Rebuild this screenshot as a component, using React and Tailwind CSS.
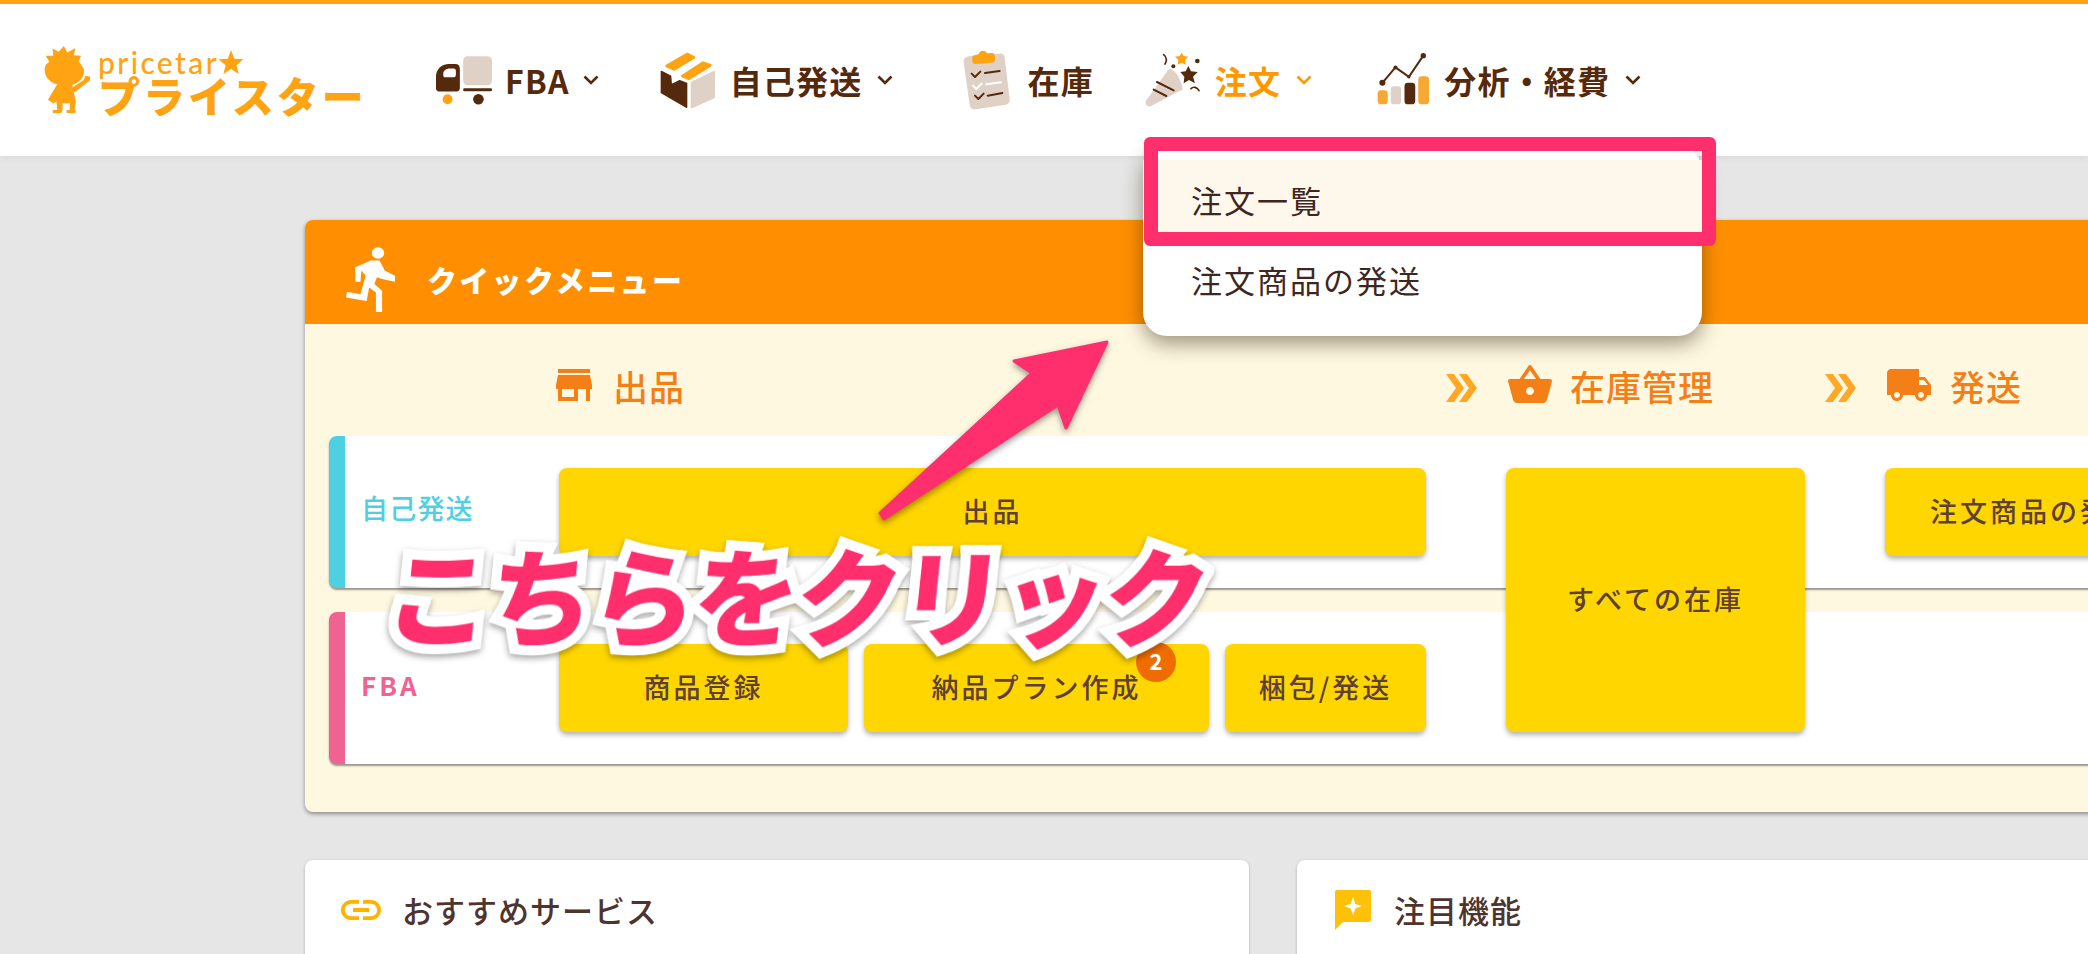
import React from "react";

const Chevron = ({ color = "#55290b" }) => (
  <svg width="16" height="10" viewBox="0 0 16 10" className="shrink-0">
    <path d="M1.5 1.5 L8 8 L14.5 1.5" fill="none" stroke={color} strokeWidth="2.6" />
  </svg>
);

const Mascot = () => (
  <svg width="48" height="70" viewBox="40 30 145 210" className="shrink-0">
    <g fill="#ffa313">
      <path d="M45 62 L68 62 L66 40 L84 50 L100 32 L110 52 L135 38 L130 60 L152 62 L145 78 L160 100 C166 130 140 152 105 152 C70 152 42 135 42 105 C42 92 48 86 56 80 Z" />
      <path d="M80 148 L125 148 L136 200 L132 228 L118 228 L118 205 L96 205 L96 228 L80 228 L78 200 L68 205 L52 195 Z" />
      <path d="M122 160 L160 135 L165 122 L180 125 L178 137 L132 172 Z" />
      <rect x="66" y="226" width="28" height="9" rx="4" />
      <rect x="108" y="226" width="28" height="9" rx="4" />
    </g>
  </svg>
);

const Logo = () => (
  <div className="flex w-[326px] items-center shrink-0">
    <Mascot />
    <div className="ml-[6px] pb-[4px] flex flex-col">
      <div className="mt-[5px] flex items-center h-[30px] text-[#ffa313] text-[30px] leading-none font-medium font-['Lato',sans-serif] tracking-[2.4px]">
        pricetar
        <svg width="26" height="26" viewBox="0 0 24 24" className="-ml-[1px]">
          <path fill="#ffa313" d="M12 1 L15 9 L23.500 9.500 L17 15 L19 23 L12 18.500 L5 23 L7 15 L0.500 9.500 L9 9 Z" />
        </svg>
      </div>
      <div className="h-[36px] text-[#ffa313] text-[42px] leading-[36px] font-black whitespace-nowrap tracking-[3px]">プライスター</div>
    </div>
  </div>
);

const IconTruckCart = () => (
  <svg width="58" height="50" viewBox="30 45 175 150" className="shrink-0">
    <rect x="115" y="48" width="87" height="88" rx="14" fill="#e0d1c7" />
    <rect x="115" y="145" width="87" height="9" rx="4" fill="#55290b" />
    <path fill="#55290b" fillRule="evenodd" d="M33 110 C33 88 50 72 72 72 L92 72 C100 72 105 78 105 86 L105 145 C105 151 100 155 95 155 L42 155 C37 155 33 151 33 146 Z M55 100 C55 92 64 85 75 85 L86 85 C91 85 93 88 93 92 L93 104 C93 109 90 112 85 112 L60 112 C57 112 55 109 55 105 Z" />
    <circle cx="68" cy="178" r="15" fill="#ffa313" />
    <circle cx="161" cy="178" r="16" fill="#55290b" />
  </svg>
);

const IconBox = () => (
  <svg width="56" height="58" viewBox="713 33 168 174" className="shrink-0">
    <path fill="#ffa313" stroke="#ffa313" strokeWidth="8" strokeLinejoin="round" d="M733 78 L795 42 L815 52 L755 88 Z" />
    <path fill="#ffa313" stroke="#ffa313" strokeWidth="8" strokeLinejoin="round" d="M780 108 L842 68 L864 76 L800 116 Z" />
    <path fill="#e0d1c7" stroke="#e0d1c7" strokeWidth="6" strokeLinejoin="round" d="M808 128 L875 96 L875 172 L808 202 Z" />
    <path fill="#55290b" stroke="#55290b" strokeWidth="4" strokeLinejoin="round" d="M717 94 L745 108 L747 134 L760 128 L772 122 L793 130 L793 202 L717 158 Z" />
  </svg>
);

const IconClipboard = () => (
  <svg width="47" height="60" viewBox="40 33 141 180" className="shrink-0">
    <path fill="#e0d1c7" d="M58 52 L150 44 C160 43 164 48 165 56 L180 180 C181 190 176 196 168 197 L78 211 C68 212 62 208 60 198 L42 70 C41 60 48 54 58 52 Z" />
    <path fill="#ffa313" d="M68 58 C66 52 72 48 78 48 L87 46 C88 36 105 30 112 43 L127 42 C134 42 136 48 136 54 L136 62 C136 68 132 70 126 71 L76 75 C70 75 68 70 68 65 Z" />
    <g fill="none" strokeWidth="6" strokeLinecap="round" strokeLinejoin="round">
      <path stroke="#55290b" d="M66 104 L76 114 L92 98" />
      <path stroke="#55290b" d="M106 102 L150 96" />
      <path stroke="#fff" d="M70 140 L80 150 L96 134" />
      <path stroke="#fff" d="M110 136 L154 130" />
      <path stroke="#55290b" d="M76 170 L86 180 L102 164" />
      <path stroke="#55290b" d="M114 170 L158 162" />
    </g>
  </svg>
);

const IconParty = () => (
  <svg width="55" height="55" viewBox="586 40 165 165" className="shrink-0">
    <path fill="#e0d1c7" stroke="#e0d1c7" strokeWidth="8" strokeLinejoin="round" d="M660 94 C680 100 690 130 695 150 L604 198 C596 202 590 196 593 188 Z" />
    <path stroke="#55290b" strokeWidth="6" strokeLinecap="round" d="M622 130 L672 155 M612 153 L650 172" fill="none" />
    <path fill="#55290b" d="M716 82 L724 98 L744 100 L730 114 L736 134 L718 124 L702 134 L704 114 L692 100 L708 98 Z" />
    <path fill="#ffa313" d="M696 42 L702 52 L716 54 L706 64 L708 78 L696 72 L684 78 L686 64 L676 54 L690 52 Z" />
    <circle cx="671" cy="83" r="6" fill="#55290b" />
    <circle cx="743" cy="67" r="7" fill="#55290b" />
    <path fill="none" stroke="#55290b" strokeWidth="5" strokeLinecap="round" d="M642 48 C652 56 652 68 646 76 M724 150 C732 142 742 146 748 156" />
  </svg>
);

const IconChart = () => (
  <svg width="53" height="53" viewBox="17 29 158 158" className="shrink-0">
    <rect x="19" y="140" width="30" height="42" rx="10" fill="#f5a933" />
    <rect x="58" y="128" width="31" height="54" rx="10" fill="#e0d1c7" />
    <rect x="99" y="118" width="32" height="64" rx="10" fill="#55290b" />
    <rect x="140" y="98" width="32" height="84" rx="10" fill="#f5a933" />
    <path fill="none" stroke="#55290b" strokeWidth="6" d="M33 118 L72 72 L112 100 L155 37" />
    <circle cx="33" cy="118" r="9" fill="#55290b" />
    <circle cx="72" cy="72" r="6" fill="#55290b" />
    <circle cx="112" cy="100" r="5" fill="#55290b" />
    <circle cx="155" cy="37" r="8" fill="#55290b" />
  </svg>
);

const NavItem = ({ icon, label, chevron = true, active, className, gap, chevGap }) => (
  <div className={"flex items-center shrink-0 " + className}>
    {icon}
    <span className={gap + " text-[32px] leading-none font-bold tracking-[1.2px] whitespace-nowrap " + (active ? "text-[#ff9800]" : "text-[#55290b]")}>{label}</span>
    {chevron && <span className={chevGap}><Chevron color={active ? "#ff9800" : "#55290b"} /></span>}
  </div>
);

const Btn = ({ className, children }) => (
  <div className={"flex items-center justify-center rounded-lg bg-[#ffd600] text-[#5d4037] text-[27px] pb-[2px] font-medium tracking-[3px] whitespace-nowrap shadow-[0_3px_5px_rgba(0,0,0,0.3)] " + className}>
    {children}
  </div>
);

const Heading = ({ d, label, className, textClass }) => (
  <div className={"flex items-center self-end mb-[3px] " + className}>
    <svg width="48" height="48" viewBox="0 0 24 24" fill="#f57f17" className="shrink-0"><path d={d} /></svg>
    <span className={"text-[#f57f17] text-[35px] font-medium tracking-[1px] leading-none whitespace-nowrap " + textClass}>{label}</span>
  </div>
);

const DoubleChevron = ({ className }) => (
  <svg width="32" height="28" viewBox="0 0 32 28" className={"self-end mb-[10px] ml-[20px] " + className}>
    <path fill="#ffa726" d="M0 0 H8 L18 14 L8 28 H0 L10 14 Z M13 0 H21 L31 14 L21 28 H13 L23 14 Z" />
  </svg>
);

export default function App() {
  return (
    <div className="relative w-[2088px] h-[954px] overflow-hidden bg-[#e5e6e5] font-['Noto_Sans_CJK_JP',sans-serif]">
      <header className="h-[156px] border-t-4 border-[#ffa313] bg-white flex items-center pl-[44px] pb-[1px] shadow-[0_2px_6px_rgba(0,0,0,0.06)]">
        <Logo />
        <NavItem className="ml-[65px]" icon={<IconTruckCart />} label="FBA" gap="ml-[12px]" chevGap="ml-[13px]" />
        <NavItem className="ml-[61px]" icon={<IconBox />} label="自己発送" gap="ml-[14px]" chevGap="ml-[15px]" />
        <NavItem className="ml-[70px]" icon={<IconClipboard />} label="在庫" chevron={false} gap="ml-[17px]" />
        <NavItem className="ml-[51px]" icon={<IconParty />} label="注文" active gap="ml-[15px]" chevGap="ml-[15px]" />
        <NavItem className="ml-[65px]" icon={<IconChart />} label="分析・経費" gap="ml-[14px]" chevGap="ml-[15px]" />
      </header>

      <main className="ml-[305px] w-[1900px] pt-[64px]">
        <section className="h-[592px] rounded-lg bg-[#fff8e1] shadow-[0_2px_4px_rgba(0,0,0,0.4)] overflow-hidden">
          <div className="h-[104px] bg-[#ff8f00] flex items-center pl-[41px] pt-[14px]">
            <svg width="49" height="65" viewBox="110 115 95 193" preserveAspectRatio="none" className="shrink-0">
              <ellipse cx="172" cy="133" rx="12" ry="17" fill="#fff" />
              <path fill="#fff" d="M128 175 L158 155 L175 155 L185 185 L205 200 L205 218 L180 210 L170 205 L165 225 L180 245 L180 308 L168 308 L168 250 L155 235 L150 275 L110 265 L112 248 L138 255 L148 200 L140 185 L138 218 L128 218 Z" />
            </svg>
            <span className="ml-[32px] text-white text-[30px] font-black tracking-[2.3px] leading-none whitespace-nowrap">クイックメニュー</span>
          </div>

          <div className="px-[24px] grid grid-cols-[230px_867px_80px_299px_80px_1fr] grid-rows-[88px_152px_152px] gap-y-[24px]">
            <Heading className="col-start-2 row-start-1 -ml-[9px]" textClass="ml-[15px]" label="出品" d="M20 4H4v2h16V4zm1 10v-2l-1-5H4l-1 5v2h1v6h10v-6h4v6h2v-6h1zm-9 4H6v-4h6v4z" />
            <DoubleChevron className="col-start-3 row-start-1" />
            <Heading className="col-start-4 row-start-1" textClass="ml-[16px]" label="在庫管理" d="M17.21 9l-4.38-6.56c-.19-.28-.51-.42-.83-.42-.32 0-.64.14-.83.43L6.79 9H2c-.55 0-1 .45-1 1 0 .09.01.18.04.27l2.54 9.27c.23.84 1 1.46 1.92 1.46h13c.92 0 1.69-.62 1.93-1.46l2.54-9.27L23 10c0-.55-.45-1-1-1h-4.79zM9 9l3-4.4L15 9H9zm3 8c-1.1 0-2-.9-2-2s.9-2 2-2 2 .9 2 2-.9 2-2 2z" />
            <DoubleChevron className="col-start-5 row-start-1" />
            <Heading className="col-start-6 row-start-1" textClass="ml-[17px]" label="発送" d="M20 8h-3V4H3c-1.1 0-2 .9-2 2v11h2c0 1.66 1.34 3 3 3s3-1.34 3-3h6c0 1.66 1.34 3 3 3s3-1.34 3-3h2v-5l-3-4zM6 18.5c-.83 0-1.5-.67-1.5-1.5s.67-1.5 1.5-1.5 1.5.67 1.5 1.5-.67 1.5-1.5 1.5zm13.5-9l1.96 2.5H17V9.5h2.5zm-1.5 9c-.83 0-1.5-.67-1.5-1.5s.67-1.5 1.5-1.5 1.5.67 1.5 1.5-.67 1.5-1.5 1.5z" />

            <div className="col-start-1 col-end-7 row-start-2 bg-white rounded-l-lg border-l-[16px] border-[#4dd0e1] shadow-[0_2px_2px_rgba(0,0,0,0.4)] flex items-center pl-[16px] pb-[8px]">
              <span className="text-[#4dd0e1] text-[27px] font-medium tracking-[1.2px] whitespace-nowrap">自己発送</span>
            </div>
            <div className="col-start-1 col-end-7 row-start-3 bg-white rounded-l-lg border-l-[16px] border-[#f06292] shadow-[0_2px_2px_rgba(0,0,0,0.4)] flex items-center pl-[16px] pb-[7px]">
              <span className="text-[#f06292] text-[26px] font-bold tracking-[3px] whitespace-nowrap">FBA</span>
            </div>

            <Btn className="col-start-2 row-start-2 my-[32px] z-10">出品</Btn>
            <div className="col-start-2 row-start-3 my-[32px] z-10 flex gap-[16px]">
              <Btn className="w-[289px]">商品登録</Btn>
              <div className="relative w-[345px] flex">
                <Btn className="w-full">納品プラン作成</Btn>
                <span className="absolute left-[272px] -top-[2px] w-[40px] h-[40px] pb-[4px] rounded-full bg-[#ef6c00] text-white text-[22px] font-bold flex items-center justify-center">2</span>
              </div>
              <Btn className="w-[201px]">梱包/発送</Btn>
            </div>
            <Btn className="col-start-4 row-start-2 row-end-4 my-[32px] z-10">すべての在庫</Btn>
            <Btn className="col-start-6 row-start-2 my-[32px] w-[300px] z-10">注文商品の発送</Btn>
          </div>
        </section>

        <div className="mt-[48px] flex gap-[48px]">
          <section className="w-[944px] shrink-0 h-[200px] rounded-lg bg-white shadow-[0_1px_3px_rgba(0,0,0,0.25)] pl-[32px] pt-[26px] flex items-start">
            <svg width="48" height="48" viewBox="0 0 24 24" fill="#ffb300" className="shrink-0"><path d="M3.9 12c0-1.71 1.39-3.1 3.1-3.1h4V7H7c-2.76 0-5 2.24-5 5s2.24 5 5 5h4v-1.9H7c-1.71 0-3.1-1.39-3.1-3.1zM8 13h8v-2H8v2zm9-6h-4v1.900h4c1.71 0 3.1 1.39 3.100 3.100s-1.39 3.100-3.100 3.100h-4V17h4c2.760 0 5-2.240 5-5s-2.240-5-5-5z" /></svg>
            <span className="ml-[17px] text-[#4e342e] text-[31px] font-medium tracking-[1px] leading-[48px] whitespace-nowrap">おすすめサービス</span>
          </section>
          <section className="w-[944px] shrink-0 h-[200px] rounded-lg bg-white shadow-[0_1px_3px_rgba(0,0,0,0.25)] pl-[32px] pt-[26px] flex items-start">
            <svg width="48" height="48" viewBox="0 0 24 24" className="shrink-0">
              <path fill="#ffc107" d="M20 2H4c-.6 0-1 .4-1 1v19l4-4h13c.6 0 1-.4 1-1V3c0-.6-.4-1-1-1z" />
              <path fill="#fff" d="M12 5.500 L13.200 9 L16.500 10 L13.200 11.200 L12 14.500 L10.800 11.200 L7.500 10 L10.800 9 Z" />
            </svg>
            <span className="ml-[17px] text-[#4e342e] text-[31px] font-medium tracking-[1px] leading-[48px] whitespace-nowrap">注目機能</span>
          </section>
        </div>
      </main>

      {/* open dropdown */}
      <div className="absolute left-[1143px] top-[146px] w-[559px] h-[190px] rounded-[24px] bg-white py-[14px] shadow-[0_8px_20px_rgba(40,30,0,0.45)] z-20">
        <div className="h-[80px] bg-[#fef7ec] flex items-center pl-[48px] text-[#3e2723] text-[31px] tracking-[2px]">注文一覧</div>
        <div className="h-[80px] flex items-center pl-[48px] text-[#3e2723] text-[31px] tracking-[2px]">注文商品の発送</div>
      </div>

      {/* annotation: highlight box */}
      <div className="absolute left-[1144px] top-[137px] w-[572px] h-[109px] rounded-[6px] border-[14px] border-[#ff2f6d] z-30" />

      {/* annotation: arrow */}
      <svg width="260" height="200" viewBox="870 330 260 200" className="absolute left-[870px] top-[330px] z-30 drop-shadow-[0_3px_3px_rgba(0,0,0,0.4)]">
        <path fill="#ff2f6d" stroke="#ff2f6d" strokeWidth="3" strokeLinejoin="round" d="M880 513 L1032 373 L1014 361 L1107 342 L1066 428 L1058 405 L884 519 Z" />
      </svg>

      {/* annotation: caption */}
      <div className="absolute left-[387px] top-[512px] z-30 text-[#ff2f6d] text-[106px] leading-[160px] font-black tracking-[-3.500px] whitespace-nowrap -skew-x-6 [paint-order:stroke_fill] [-webkit-text-stroke:20px_white] drop-shadow-[0_3px_3px_rgba(0,0,0,0.35)]">
        こちらをクリック
      </div>
    </div>
  );
}
